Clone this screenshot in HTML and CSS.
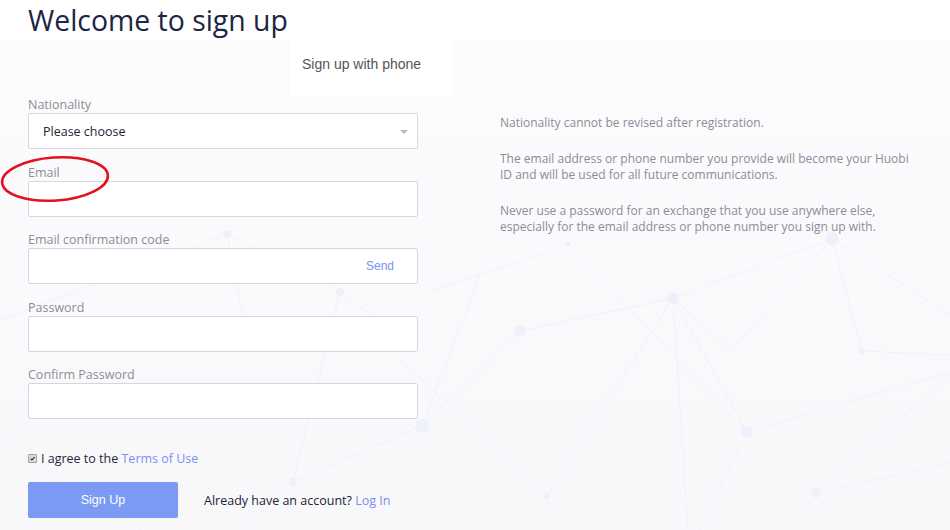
FILE: index.html
```html
<!DOCTYPE html>
<html lang="en">
<head>
<meta charset="utf-8">
<title>Welcome to sign up</title>
<link rel="stylesheet" href="styles.css">
</head>
<body>
<div class="page">
  <svg class="network" width="950" height="530" viewBox="0 0 950 530" aria-hidden="true">
    <g class="net-lines">
      <line x1="430" y1="291" x2="568" y2="244"/>
      <line x1="568" y1="244" x2="747" y2="432"/>
      <line x1="673" y1="298" x2="731" y2="350"/>
      <line x1="731" y1="350" x2="832" y2="239"/>
      <line x1="673" y1="298" x2="832" y2="239"/>
      <line x1="520" y1="331" x2="673" y2="298"/>
      <line x1="520" y1="331" x2="422" y2="426"/>
      <line x1="400" y1="360" x2="547" y2="496"/>
      <line x1="547" y1="496" x2="673" y2="298"/>
      <line x1="673" y1="298" x2="747" y2="432"/>
      <line x1="673" y1="298" x2="688" y2="530"/>
      <line x1="747" y1="432" x2="700" y2="530"/>
      <line x1="747" y1="432" x2="950" y2="372"/>
      <line x1="832" y1="239" x2="862" y2="351"/>
      <line x1="862" y1="351" x2="950" y2="355"/>
      <line x1="832" y1="239" x2="950" y2="315"/>
      <line x1="816" y1="493" x2="950" y2="375"/>
      <line x1="816" y1="493" x2="950" y2="463"/>
      <line x1="227" y1="234" x2="340" y2="292"/>
      <line x1="227" y1="234" x2="250" y2="352"/>
      <line x1="340" y1="292" x2="293" y2="482"/>
      <line x1="340" y1="292" x2="420" y2="350"/>
      <line x1="293" y1="482" x2="245" y2="530"/>
      <line x1="293" y1="482" x2="422" y2="426"/>
      <line x1="0" y1="320" x2="227" y2="234"/>
      <line x1="0" y1="440" x2="140" y2="530"/>
      <line x1="422" y1="426" x2="480" y2="275"/>
    </g>
    <g class="net-nodes">
      <circle cx="568" cy="244" r="2.5"/>
      <circle cx="832" cy="239" r="7"/>
      <circle cx="673" cy="298" r="6"/>
      <circle cx="520" cy="331" r="6"/>
      <circle cx="862" cy="351" r="3"/>
      <circle cx="747" cy="432" r="6"/>
      <circle cx="547" cy="496" r="3"/>
      <circle cx="816" cy="493" r="5"/>
      <circle cx="227" cy="234" r="4"/>
      <circle cx="340" cy="292" r="4"/>
      <circle cx="422" cy="426" r="7"/>
      <circle cx="293" cy="482" r="4"/>
    </g>
  </svg>

  <header class="header">
    <h1 class="title">Welcome to sign up</h1>
  </header>

  <main class="content">
    <nav class="tabs">
      <a class="tab">Sign up with phone</a>
    </nav>

    <div class="columns">
      <form class="form">
        <div class="field first">
          <label class="label">Nationality</label>
          <div class="input select">
            <span class="select-text">Please choose</span>
            <span class="caret"></span>
          </div>
        </div>
        <div class="field email-field">
          <label class="label">Email</label>
          <div class="input"></div>
          <svg class="mark" width="116" height="52" viewBox="0 0 116 52" aria-hidden="true">
            <ellipse cx="56" cy="26" rx="53" ry="21.5" transform="rotate(-4 56 26)"/>
          </svg>
        </div>
        <div class="field">
          <label class="label">Email confirmation code</label>
          <div class="input with-action"><span class="send">Send</span></div>
        </div>
        <div class="field">
          <label class="label">Password</label>
          <div class="input"></div>
        </div>
        <div class="field">
          <label class="label">Confirm Password</label>
          <div class="input"></div>
        </div>

        <div class="agree">
          <span class="check">
            <svg width="9" height="9" viewBox="0 0 9 9" aria-hidden="true"><path d="M2 4.6 L3.8 6.4 L7.2 2.6"/></svg>
          </span>
          <span>I agree to the <a class="link">Terms of Use</a></span>
        </div>

        <div class="actions">
          <button class="btn" type="button">Sign Up</button>
          <span class="login">Already have an account? <a class="link">Log In</a></span>
        </div>
      </form>

      <aside class="tips">
        <p class="tip t1">Nationality cannot be revised after registration.</p>
        <p class="tip t2">The email address or phone number you provide will become your Huobi ID and will be used for all future communications.</p>
        <p class="tip t3">Never use a password for an exchange that you use anywhere else, especially for the email address or phone number you sign up with.</p>
      </aside>
    </div>
  </main>
</div>
</body>
</html>
```

FILE: styles.css
```css
* { box-sizing: border-box; }

html, body {
  margin: 0;
  padding: 0;
}

body {
  width: 950px;
  height: 530px;
  overflow: hidden;
  background: #f9f9fb;
  font-family: "Open Sans", "Noto Sans", sans-serif;
  color: #333;
}

.page {
  position: relative;
  width: 950px;
  height: 530px;
  background: linear-gradient(180deg, #fcfcfd 0%, #f8f8fb 100%);
}

.network {
  position: absolute;
  left: 0;
  top: 0;
  z-index: 0;
}

.net-lines line {
  stroke: #f1f2f8;
  stroke-width: 1;
}

.net-nodes circle {
  fill: #eef1fc;
}

.header {
  position: relative;
  z-index: 1;
  height: 40px;
  background: #fff;
  padding-left: 28px;
}

.title {
  margin: 0;
  font-family: "Open Sans", sans-serif;
  font-weight: 400;
  font-size: 28.4px;
  line-height: 40px;
  color: #1c2541;
  letter-spacing: 0;
}

.content {
  position: relative;
  z-index: 1;
}

.tabs {
  display: flex;
  padding-left: 290px;
  height: 57px;
}

.tab {
  width: 162px;
  height: 57px;
  background: #fff;
  padding-left: 12px;
  padding-top: 16px;
  font-family: "Liberation Sans", Arial, sans-serif;
  font-size: 14px;
  color: #555;
}

.columns {
  display: flex;
}

.form {
  width: 390px;
  margin-left: 28px;
}

.field {
  position: relative;
  margin-top: 15.5px;
}

.field.first {
  margin-top: 0;
}

.label {
  display: block;
  height: 16px;
  font-size: 12.5px;
  line-height: 16px;
  color: #8d8d96;
}

.input {
  height: 36px;
  background: #fff;
  border: 1px solid #d6d6e2;
  border-radius: 2px;
}

.select {
  display: flex;
  align-items: center;
  justify-content: space-between;
  padding: 0 9px 0 14px;
}

.select-text {
  font-size: 12.5px;
  color: #1f2433;
}

.caret {
  width: 0;
  height: 0;
  border-left: 4px solid transparent;
  border-right: 4px solid transparent;
  border-top: 4px solid #b9b9c2;
  margin-top: 2px;
}

.with-action {
  display: flex;
  align-items: center;
  justify-content: flex-end;
  padding-right: 23px;
}

.send {
  font-family: "Liberation Sans", Arial, sans-serif;
  font-size: 12px;
  color: #7b92ee;
}

.mark {
  position: absolute;
  left: -29px;
  top: -12px;
}

.mark ellipse {
  fill: none;
  stroke: #e5101d;
  stroke-width: 2.6;
}

.agree {
  display: flex;
  align-items: center;
  gap: 4px;
  margin-top: 31px;
  height: 16px;
  font-size: 12.5px;
  color: #23283a;
}

.check {
  display: flex;
  align-items: center;
  justify-content: center;
  width: 9px;
  height: 9px;
  background: #dcdcdc;
  border: 1px solid #a0a0a0;
  border-radius: 1px;
}

.check svg {
  display: block;
}

.check path {
  fill: none;
  stroke: #333;
  stroke-width: 1.5;
}

.link {
  color: #7b8fee;
  text-decoration: none;
}

.actions {
  display: flex;
  align-items: center;
  margin-top: 16px;
}

.btn {
  width: 150px;
  height: 36px;
  border: 0;
  border-radius: 2px;
  background: #7b9af4;
  color: #fff;
  font-family: "Liberation Sans", Arial, sans-serif;
  font-size: 12.5px;
  padding: 0;
}

.login {
  margin-left: 26px;
  font-size: 12.5px;
  color: #1f2433;
}

.tips {
  margin-left: 82px;
  width: 418px;
  padding-top: 18px;
}

.tip {
  margin: 0;
  font-size: 12px;
  line-height: 16px;
  color: #8b8c99;
}

.t2 { margin-top: 20px; }
.t3 { margin-top: 20px; }
```
